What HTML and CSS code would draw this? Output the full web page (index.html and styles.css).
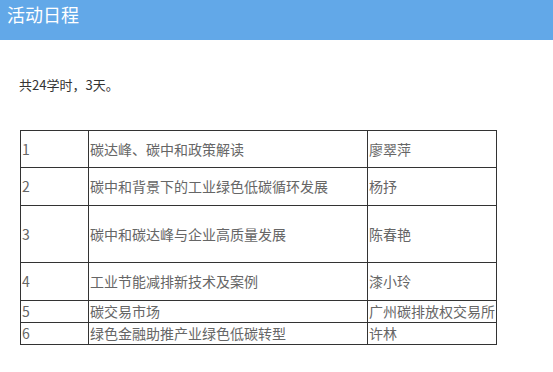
FILE: index.html
```html
<!DOCTYPE html>
<html lang="zh">
<head>
<meta charset="utf-8">
<title>活动日程</title>
<link rel="stylesheet" href="styles.css">
</head>
<body>
<div class="header">活动日程</div>
<div class="content">
  <p class="intro">共24学时，3天。</p>
  <table class="schedule">
    <colgroup>
      <col class="c-num">
      <col class="c-topic">
      <col class="c-name">
    </colgroup>
    <tr class="r37"><td>1</td><td>碳达峰、碳中和政策解读</td><td>廖翠萍</td></tr>
    <tr class="r38"><td>2</td><td>碳中和背景下的工业绿色低碳循环发展</td><td>杨抒</td></tr>
    <tr class="r57"><td>3</td><td>碳中和碳达峰与企业高质量发展</td><td>陈春艳</td></tr>
    <tr class="r38"><td>4</td><td>工业节能减排新技术及案例</td><td>漆小玲</td></tr>
    <tr class="r21"><td>5</td><td>碳交易市场</td><td>广州碳排放权交易所</td></tr>
    <tr class="r21"><td>6</td><td>绿色金融助推产业绿色低碳转型</td><td>许林</td></tr>
  </table>
</div>
</body>
</html>
```
FILE: styles.css
```css
html, body {
  margin: 0;
  padding: 0;
  background: #fff;
}
body {
  font-family: "Noto Sans CJK SC", "Microsoft YaHei", sans-serif;
}
.header {
  height: 40px;
  box-sizing: border-box;
  background: #62a8e8;
  color: #fff;
  font-size: 18px;
  line-height: 29px;
  padding: 0 7px;
}
.content {
  padding: 0 20px;
}
.intro {
  margin: 35px 0 0 -1px;
  font-size: 13px;
  line-height: 20px;
  color: #333;
}
.schedule {
  margin-top: 35px;
  border-collapse: collapse;
  table-layout: fixed;
  width: 476px;
  font-size: 14px;
  color: #666;
}
.c-num { width: 68px; }
.c-topic { width: 279px; }
.c-name { width: 129px; }
.schedule td {
  border: 1px solid #333;
  padding: 0 0 0 1px;
  vertical-align: middle;
  line-height: 19px;
  white-space: nowrap;
}
.r37 td { height: 36px; }
.r38 td { height: 37px; }
.r57 td { height: 56px; }
.r21 td { height: 21px; }
```
